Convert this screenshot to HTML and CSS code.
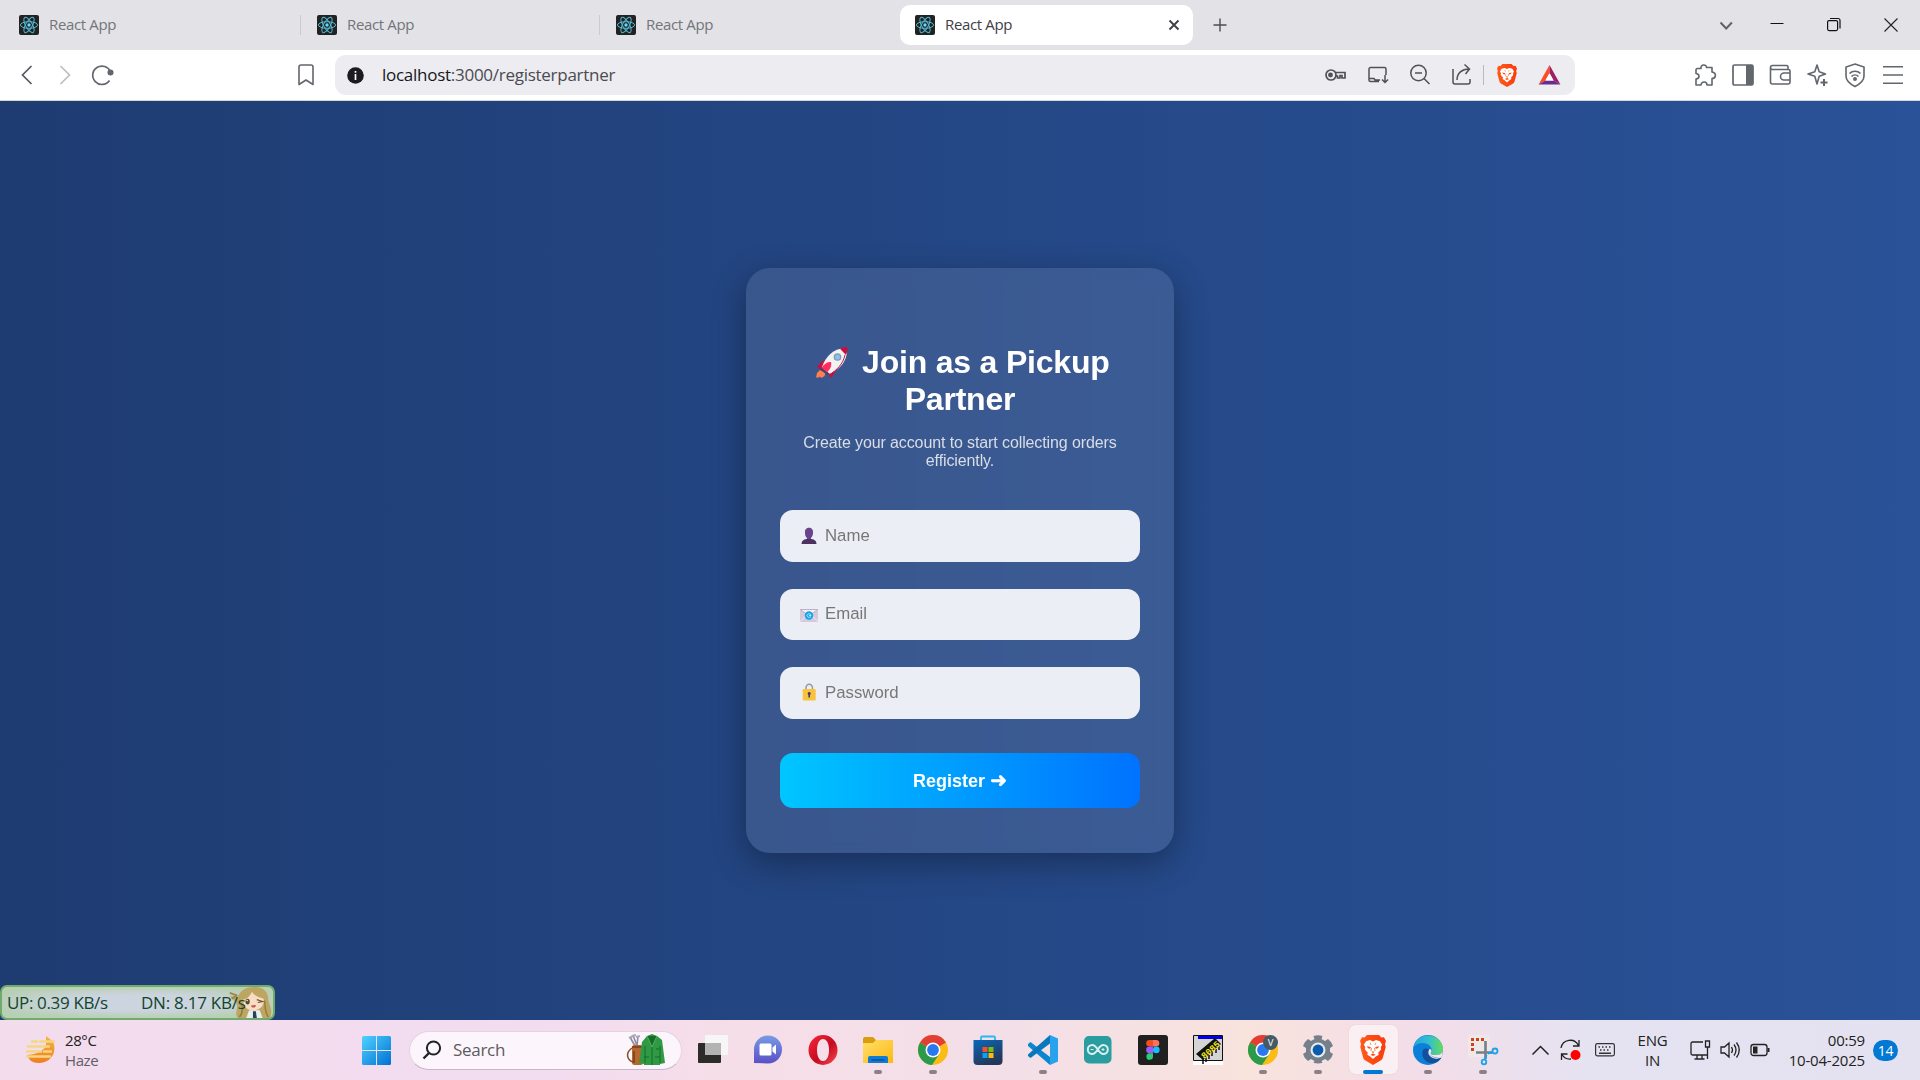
FILE: index.html
```html
<!DOCTYPE html>
<html lang="en">
<head>
<meta charset="utf-8">
<title>React App</title>
<link rel="stylesheet" href="styles.css">
</head>
<body>
<svg class="defs" aria-hidden="true">
  <defs>
    <symbol id="react" viewBox="0 0 20 20">
      <rect width="20" height="20" rx="2" fill="#222"/>
      <g fill="none" stroke="#53b9d4" stroke-width="1"><ellipse cx="10" cy="10" rx="8.6" ry="3.3"/><ellipse cx="10" cy="10" rx="8.6" ry="3.3" transform="rotate(60 10 10)"/><ellipse cx="10" cy="10" rx="8.6" ry="3.3" transform="rotate(120 10 10)"/></g>
      <circle cx="10" cy="10" r="1.7" fill="#61dafb"/>
    </symbol>
    <symbol id="lion" viewBox="0 0 26 30">
      <path d="M7 0h12l2.500 2.600 2.500-.4 2 3.800-1 3 .7 3-2.800 10.500c-.4 1.500-1.200 2.300-2.400 3.100L13 30l-7.500-4.400c-1.200-.8-2-1.600-2.400-3.100L.3 12 1 9 0 6l2-3.800 2.500.4z" fill="url(#braveg)"/>
      <g transform="translate(1.700 1.600) scale(.87)">
      <path d="M13 5.500l3.500-1.500 4.500 1.300 2.500 4-1.500 2.700.3 2.800-3.300 3.700.6 2.300-3.400 2.200L13 25.800l-3.200-2.800-3.400-2.200.6-2.300-3.300-3.700.3-2.800L2.500 9.300l2.500-4L9.500 4z" fill="#fff"/>
      <path d="M6 11l4.500 1-.8 1.900-2.500-.6zM20 11l-4.500 1 .8 1.900 2.500-.6zM11.300 17h3.400L13 19zM10 20.800l3-1.500 3 1.500-3 1.500z" fill="#fb4a12"/>
      <path d="M9.500 7l1.300 2.500M16.500 7l-1.300 2.500M11.300 13l-.7 3.500M14.700 13l.7 3.500" stroke="#fb4a12" stroke-width=".8"/>
      </g>
    </symbol>
    <symbol id="chrome" viewBox="0 0 30 30">
      <circle cx="15" cy="15" r="15" fill="#fbbc16"/>
      <path d="M15 15L2 7.500A15 15 0 0 0 14 30l7.500-11.300z" fill="#2c9a4b"/>
      <path d="M15 15L2 7.500A15 15 0 0 1 28 7.500z" fill="#e23e33"/>
      <circle cx="15" cy="15" r="7.500" fill="#fff"/><circle cx="15" cy="15" r="5.900" fill="#2a78ee"/>
    </symbol>
    <linearGradient id="braveg"><stop offset="0" stop-color="#ff5a1c"/><stop offset="1" stop-color="#f93c0c"/></linearGradient>
    <linearGradient id="win" x2="1" y2="1"><stop offset="0" stop-color="#4fd3ff"/><stop offset="1" stop-color="#0070d2"/></linearGradient>
    <linearGradient id="chatg" x2="0" y2="1"><stop offset="0" stop-color="#789be4"/><stop offset="1" stop-color="#5a4fc6"/></linearGradient>
    <linearGradient id="operag" x2="1" y2="1"><stop offset="0" stop-color="#ff2638"/><stop offset=".55" stop-color="#c30c22"/><stop offset="1" stop-color="#ff4a50"/></linearGradient>
    <linearGradient id="foldg" x2="1" y2="1"><stop offset="0" stop-color="#ffdf6c"/><stop offset="1" stop-color="#fdb910"/></linearGradient>
    <linearGradient id="storeg" x2=".5" y2="1"><stop offset="0" stop-color="#0969bb"/><stop offset="1" stop-color="#253658"/></linearGradient>
    <linearGradient id="edgeg"><stop offset="0" stop-color="#25a6df"/><stop offset=".5" stop-color="#31bdd2"/><stop offset="1" stop-color="#66dc59"/></linearGradient>
    <linearGradient id="sung" x2="0" y2="1"><stop offset="0" stop-color="#f4b640"/><stop offset="1" stop-color="#f17d22"/></linearGradient>
  </defs>
</svg>

<header class="tabs">
  <div class="tab"><svg class="i20"><use href="#react"/></svg><span>React App</span></div>
  <div class="tab"><svg class="i20"><use href="#react"/></svg><span>React App</span></div>
  <div class="tab plain"><svg class="i20"><use href="#react"/></svg><span>React App</span></div>
  <div class="tab active"><svg class="i20"><use href="#react"/></svg><span>React App</span>
    <svg class="close" viewBox="0 0 12 12"><path d="M1.500 1.500l9 9M10.500 1.500l-9 9" stroke="#3e4146" stroke-width="1.900"/></svg></div>
  <svg class="plus" viewBox="0 0 14 14"><path d="M7 .5v13M.5 7h13" stroke="#4b4d52" stroke-width="1.400"/></svg>
  <div class="controls">
    <svg class="i20" viewBox="0 0 20 20" fill="none" stroke="#5f6368" stroke-width="2"><path d="M4.500 7.500l5.700 6 5.700-6"/></svg>
    <svg class="i20" viewBox="0 0 20 20" fill="none" stroke="#111" stroke-width="1"><path d="M3.500 8.500h13"/></svg>
    <svg class="i20" viewBox="0 0 20 20" fill="none" stroke="#111" stroke-width="1.200"><rect x="3.600" y="5.600" width="10" height="10" rx="1.500"/><path d="M6 3.500h8a2 2 0 0 1 2 2v8"/></svg>
    <svg class="i20" viewBox="0 0 20 20" fill="none" stroke="#222" stroke-width="1.100"><path d="M3.500 3.500l13 13M16.500 3.500l-13 13"/></svg>
  </div>
</header>

<nav class="toolbar">
  <svg class="nav" viewBox="0 0 24 24" fill="none" stroke="#55595f" stroke-width="1.700"><path d="M16.500 3L7.500 12l9 9"/></svg>
  <svg class="nav" viewBox="0 0 24 24" fill="none" stroke="#bdbec1" stroke-width="1.700"><path d="M7.500 3l9 9-9 9"/></svg>
  <svg class="nav" viewBox="0 0 24 24" fill="none" stroke="#62666d" stroke-width="1.700"><path d="M19.500 9A9.200 9.200 0 1 0 18.500 17.500"/><circle cx="19.500" cy="9.500" r="2.200" fill="#62666d"/></svg>
  <svg class="bookmark" viewBox="0 0 16 22" fill="none" stroke="#62666d" stroke-width="1.600"><path d="M1 3a2 2 0 0 1 2-2h10a2 2 0 0 1 2 2v17.500L8 16l-7 4.500z" stroke-linejoin="round"/></svg>
  <div class="url">
    <svg class="info" viewBox="0 0 17 17"><circle cx="8.500" cy="8.500" r="8.300" fill="#1b1b20"/><path d="M8.500 4v1.700M8.500 7v6" stroke="#fff" stroke-width="1.700"/></svg>
    <span class="address"><b>localhost</b>:3000/registerpartner</span>
    <div class="urlicons">
      <svg class="i24" viewBox="0 0 24 24" fill="none" stroke="#4f5157" stroke-width="1.700"><circle cx="7" cy="12" r="5"/><circle cx="6.500" cy="12" r="1.600" fill="#4f5157"/><path d="M11.500 9.500h9.500v5.500h-3v-2.500h-2V15h-2.500v-2h-2"/></svg>
      <svg class="i24" viewBox="0 0 24 24" fill="none" stroke="#4f5157" stroke-width="1.500"><path d="M13 18.500H4.500a1.500 1.500 0 0 1-1.500-1.500V6a1.500 1.500 0 0 1 1.500-1.500h14A1.500 1.500 0 0 1 20 6v6M3 15.500h5l1 1.500h5M19 12v7M16 16.500l3 3 3-3"/></svg>
      <svg class="i24" viewBox="0 0 24 24" fill="none" stroke="#4f5157" stroke-width="1.500"><circle cx="10.500" cy="10" r="7.700"/><path d="M16 15.500l5.500 5.500M7 10h7"/></svg>
      <svg class="i24" viewBox="0 0 24 24" fill="none" stroke="#4f5157" stroke-width="1.500"><path d="M3 6v13a2 2 0 0 0 2 2h13a2 2 0 0 0 2-2v-3M7 17c0-7 5-11 12-11M14.500 1.500L19.500 6l-4 5"/></svg>
      <i></i>
      <svg class="brave"><use href="#lion"/></svg>
      <svg class="bat" viewBox="0 0 24 22"><path d="M12 0L0 21.500l7.500-4.500L12 9z" fill="#ff4b24"/><path d="M12 0l12 21.500L16.500 17 12 9z" fill="#9e1f63"/><path d="M0 21.500h24L16.500 17h-9z" fill="#662d91"/><path d="M12 9l4.500 8h-9z" fill="#fff"/></svg>
    </div>
  </div>
  <div class="right">
    <svg class="i24" viewBox="0 0 24 24" fill="none" stroke="#62666d" stroke-width="1.600" stroke-linejoin="round"><path d="M4 5.500h4C7 1 14 1 13.500 4.500h5.500V9c5 1 4 6.500 0 6.500V22h-5c0-4-5.500-4-6 0H3v-6c4-.5 4-5 0-5.500V6.500z"/></svg>
    <svg class="i24" viewBox="0 0 24 24"><rect x="2" y="2" width="20" height="20" rx="1.500" fill="none" stroke="#62666d" stroke-width="1.700"/><path d="M15 2h7v20h-7z" fill="#62666d"/></svg>
    <svg class="i24" viewBox="0 0 24 24" fill="none" stroke="#62666d" stroke-width="1.600"><path d="M20 6.500V4a1.500 1.500 0 0 0-1.500-1.500H4.500a2 2 0 0 0 0 4h16A1.500 1.500 0 0 1 22 8v11a2 2 0 0 1-2 2H4.500a2 2 0 0 1-2-2V4.500M22 10h-6a3.500 3.500 0 0 0 0 7h6"/></svg>
    <svg class="i24" viewBox="0 0 24 24" fill="none" stroke="#62666d" stroke-width="1.600" stroke-linejoin="round"><path d="M11 2l2.200 6.800L19.500 11l-6.300 2.200L11 21l-2.200-7.800L2 11l6.800-2.200z"/><path d="M18 16v7M14.500 19.500h7" stroke-width="2"/></svg>
    <svg class="i24" viewBox="0 0 24 24" fill="none" stroke="#62666d" stroke-width="1.600"><path d="M12 1l9 3v9c0 5-4 8-9 10.500C7 21 3 18 3 13V4z"/><path d="M6.500 10.500c3-3 8-3 11 0M8.500 13.500c2-2 5-2 7 0"/><circle cx="12" cy="16" r="1.200" fill="#62666d"/></svg>
    <svg class="i24" viewBox="0 0 24 24" fill="none" stroke="#62666d" stroke-width="1.600"><path d="M2 3.800h20M2 12h20M2 20.200h20"/></svg>
  </div>
</nav>

<main class="page">
  <form class="card">
    <h1><svg class="rocket" viewBox="0 0 32 31"><path d="M4 23l-3 3-1 4.500h3l1-1 1.500 1.500 3-2 1-3z" fill="#ff7f4e"/><path d="M1 19.500L8 13l6 1-8 10zM12 27l3 4 5-7-1-7z" fill="#c8103e"/><path d="M6 20C10 9 17 2 29 1c1.500 0 2 .5 2 2 0 11-6 18-17 24z" fill="#f2f2f4"/><path d="M24 1.700C27 .4 31-.5 31.400.6c.7 1.500-.4 5-1.400 7.400z" fill="#c8103e"/><path d="M29 8c-2 9-8 15-16 20" stroke="#c8103e" fill="none"/><path d="M6 20.500C8 16.500 12 14.500 15 15c1 4-1 8-4.500 10.500z" fill="#ff2e5f"/><path d="M4.500 21.500l7.500 6" stroke="#4b4468" stroke-width="2"/><circle cx="21.500" cy="10" r="3.200" fill="#7ec5f5" stroke="#8b98a5" stroke-width="1.300"/></svg> Join as a Pickup Partner</h1>
    <p>Create your account to start collecting orders efficiently.</p>
    <label class="field"><svg class="emoji" viewBox="0 0 18 18"><path d="M5 6c-1-7 9-7 8 0 0 3-1.500 4-2 5v2H7v-2C6 10 5 9 5 6z" fill="#6b438d"/><path d="M1.500 17c.3-3.500 2-4.500 5-5h5c3 .5 4.700 1.500 5 5z" fill="#4d315f"/></svg><input placeholder="Name"></label>
    <label class="field"><svg class="emoji" viewBox="0 0 18 18"><path d="M0 4h18v13H0z" fill="#d5c9dc"/><path d="M.5 4.500L9 11l8.500-6.500z" fill="#f5f1f7" stroke="#b4a6bd" stroke-width=".8"/><path d="M0 16.500L7 10M18 16.500L11 10" stroke="#eee7f1"/><circle cx="9" cy="10.500" r="4.200" fill="#12a5e8"/><path d="M11 11.500c-1 1.500-4 1-4-1s4-2.500 4 0h-2" stroke="#b9e7ff" fill="none"/></svg><input placeholder="Email"></label>
    <label class="field"><svg class="emoji" viewBox="0 0 18 18"><path d="M6 8V4.500a3.200 3.200 0 0 1 6.400 0V8" transform="translate(0 -1)" stroke="#9b9b9f" stroke-width="1.500" fill="none"/><rect x="2.700" y="5" width="13" height="11.500" rx="1.300" fill="#f9c23c"/><path d="M9.200 8.500v5" stroke="#433b6b" stroke-width="1.600"/><circle cx="9.200" cy="9.500" r="1.500" fill="#433b6b"/></svg><input placeholder="Password"></label>
    <button type="button">Register <span>➜</span></button>
  </form>
  <aside class="netmeter"><span>UP: 0.39 KB/s</span><span>DN: 8.17 KB/s</span>
    <svg class="girl" viewBox="0 0 44 32"><path d="M8 32C5 26 9 22 7 17L0 9l8 2c3-8 9-11 18-11 10 0 14 6 14 14 2 7 5 12 1 18z" fill="#bda562"/><path d="M0 6l8 3M2 12l5-3" stroke="#9d8846" stroke-width="2"/><path d="M14 13c5 0 8-6 9-8 3 5 9 6 12 7 1 8-4 12-11 12s-10-4-10-11z" fill="#f8dcc3"/><ellipse cx="18.500" cy="15" rx="2.200" ry="3" fill="#5d4a24"/><circle cx="18" cy="14" r=".8" fill="#fff"/><path d="M28 13l6 2-5 1" stroke="#70552f" fill="none" stroke-width="1.200"/><path d="M22 19l5-.5c0 3-4 4-5 .5z" fill="#c5514d"/><path d="M17 32l3-8h11l3 8z" fill="#e8eff0"/><path d="M24 25h3l1 7h-4z" fill="#2d4053"/><path d="M12 17c2 7 1 11-2 14M36 14c1 7 0 12 4 17" stroke="#927c3e" stroke-width="1.500" fill="none"/></svg>
  </aside>
</main>

<footer class="taskbar">
  <div class="weather">
    <svg class="sun" viewBox="0 0 31 30"><path d="M20 1c3 2 4 4 6 4 2 3 3 7 2 12-2 7-8 11-15 11S3 25 1 20c7 0 18-4 19-10z" fill="url(#sung)"/><path d="M6 6.500h5M14 6.500h14M2 11.500h21M1 16.500h14M18 16.500h7M1 21.500h23" stroke="#f6d681" stroke-width="2.400" stroke-linecap="round"/></svg>
    <div>28°C<small>Haze</small></div>
  </div>
  <svg class="start" viewBox="0 0 29 29"><path d="M0 1.500Q0 0 1.500 0H14v14H0zM15 0h12.500Q29 0 29 1.500V14H15zM0 15h14v14H1.500Q0 29 0 27.500zM15 15h14v12.500q0 1.500-1.500 1.500H15z" fill="url(#win)"/></svg>
  <div class="search">
    <svg class="i20" viewBox="0 0 20 20" fill="none" stroke="#222" stroke-width="2"><circle cx="11.500" cy="8" r="6.600"/><path d="M7 13l-5.500 5.500" stroke-width="2.400"/></svg>
    <span>Search</span>
    <svg class="golf" viewBox="0 0 38 32"><path d="M3 3l5 9M6 1l4 11M11 2l-1 10" stroke="#8b8ca0" stroke-width="1.600"/><path d="M2 4l4-2M5 2l4-1M9 3l4-1" stroke="#aaa9ba" stroke-width="2"/><rect x="5" y="11" width="11" height="20" rx="2.500" fill="#b7672e"/><path d="M5 14c-7 5-5 12 1 14" stroke="#8e4b22" fill="none" stroke-width="1.500"/><path d="M5 13h11M7 17v12" stroke="#71401f" stroke-width="1.500"/><path d="M20 2l5-2 5 2 5 4 3 23-5 1v1H17v-1l-5-1 3-21z" fill="#2f9a43"/><path d="M20 2l5 11 5-11" fill="#186b2b" stroke="#4eb45d"/><path d="M25 13v18M18 12v17M33 12v17M17 23h5M28 23h5M29 15h3" stroke="#176a29" stroke-width="1"/></svg>
  </div>
  <div class="apps">
    <div class="app"><svg viewBox="0 0 30 30"><rect y="8" width="23" height="20" rx="1" fill="#2c2c2b"/><rect x="7" y="0" width="23" height="20" rx="1" fill="#f6f6f6"/><path d="M7 8h16v12H7z" fill="#b3b3b3"/></svg></div>
    <div class="app"><svg viewBox="0 0 30 30"><path d="M1 28V14.500a14 14 0 1 1 14 14z" fill="url(#chatg)"/><rect x="6.500" y="8.500" width="12" height="12" rx="1.500" fill="#fff"/><path d="M19.500 12.500l3.500-3v10l-3.500-3z" fill="#fff"/></svg></div>
    <div class="app"><svg viewBox="0 0 30 30"><path fill-rule="evenodd" d="M15 0a14.500 15 0 1 1 0 30 14.500 15 0 1 1 0-30zM15 4c-4 0-6 5-6 11s2 11 6 11 6-5 6-11-2-11-6-11z" fill="url(#operag)"/></svg></div>
    <div class="app run"><svg viewBox="0 0 30 30"><path d="M0 4q0-2 2-2h8l3 3v7H0z" fill="#d99c0d"/><path d="M0 8h10l3-3h17v23H0z" fill="url(#foldg)"/><path d="M5 28v-5q0-2 2-2h16q2 0 2 2v5z" fill="#0f7bd3"/><path d="M8.500 25h13" stroke="#084c90" stroke-width="1.300"/></svg></div>
    <div class="app run"><svg><use href="#chrome"/></svg></div>
    <div class="app"><svg viewBox="0 0 30 30"><path d="M8 7V2.500Q8 1.500 9 1.500h12q1 0 1 1V7" stroke="#27b9f1" stroke-width="1.800" fill="none"/><path d="M.5 5h29v21q0 4-4 4h-21q-4 0-4-4z" fill="url(#storeg)"/><path d="M9.500 12h5v5h-5z" fill="#f35325"/><path d="M15.500 12h5v5h-5z" fill="#81bc06"/><path d="M9.500 18h5v5h-5z" fill="#05a6f0"/><path d="M15.500 18h5v5h-5z" fill="#ffba08"/></svg></div>
    <div class="app run"><svg viewBox="0 0 30 30"><path d="M0 9l2.500-2L22 22v8L0 11z" fill="#0b87d0"/><path d="M0 19.500L22 0v8.500L2.500 23 0 21z" fill="#0877bd"/><path d="M22 0l8 3.500v23L22 30z" fill="#29a2ee"/></svg></div>
    <div class="app"><svg viewBox="0 0 30 30"><rect x="1" y="1" width="27.500" height="27.500" rx="5" fill="#299da0"/><path d="M14.800 14.500c-2-3-3.500-4.500-5.500-4.500a4.500 4.500 0 0 0 0 9c2 0 3.500-1.500 5.500-4.500s3.500-4.500 5.500-4.500a4.500 4.500 0 0 1 0 9c-2 0-3.500-1.500-5.500-4.500z" fill="none" stroke="#dcefed" stroke-width="2"/><path d="M7.500 14.500h3M18.500 14.500h3M20 13v3" stroke="#dcefed"/></svg></div>
    <div class="app"><svg viewBox="0 0 30 30"><rect width="30" height="30" rx="3" fill="#202020"/><path d="M15 5h-3.500a3.300 3.300 0 0 0 0 6.600H15z" fill="#f24e1e"/><path d="M15 5h3a3.300 3.300 0 0 1 0 6.600h-3z" fill="#ff7262"/><path d="M15 11.600h-3.500a3.300 3.300 0 0 0 0 6.600H15z" fill="#a259ff"/><circle cx="18.300" cy="14.900" r="3.300" fill="#1abcfe"/><path d="M15 18.200h-3.500a3.300 3.300 0 1 0 3.500 3.300z" fill="#25cf73"/></svg></div>
    <div class="app"><svg viewBox="0 0 30 30"><path d="M0 0h30v30H0z" fill="#fff"/><path d="M.5.5h29v25H.5z" fill="#d5d5d5" stroke="#111"/><path d="M5 1h24v3H5z" fill="#0000e8"/><path d="M3 19L22 3l6 6L10 25z" fill="#111"/><path d="M10 24v5M13 22v5M16 20v4M19 17v4M23 14v4M26 11v4" stroke="#111" stroke-width="1.500"/><text x="-11" y="4" transform="translate(17 14) rotate(-41)" font-size="9" font-family="Liberation Mono" font-weight="700" fill="#f5eb17">8085</text></svg></div>
    <div class="app run"><svg viewBox="0 0 30 30"><use href="#chrome"/><circle cx="22.500" cy="7.500" r="7.500" fill="#465a66"/><text x="22.500" y="11" text-anchor="middle" font-family="Open Sans" font-size="9.500" fill="#fff">V</text></svg></div>
    <div class="app run"><svg viewBox="0 0 30 30"><path d="M11.500 4l-1-3q4.500-1.300 9 0l-1 3 3.500 2 3-2q4 3 5 7l-3 2v4l3 2q-1 4-5 7l-3-2-3.500 2 1 1.800q-4.500 1.300-9 0l1-1.800L8 24l-3 2q-4-3-5-7l3-2v-4l-3-2q1-4 5-7l3 2z" fill="#75808a"/><circle cx="15" cy="15" r="7.500" fill="#e6ebef"/><circle cx="15" cy="15" r="5.400" fill="#0c5cab"/></svg></div>
    <div class="app run current"><svg><use href="#lion"/></svg></div>
    <div class="app run"><svg viewBox="0 0 30 30"><circle cx="15" cy="15" r="15" fill="#0d7fd6"/><path d="M.5 12C3-3 27-4 30 13c.5 5-3 7-7.500 7-4 0-6-1-4-4 1-4-3-8-9-8-4 0-7 2-9 4z" fill="url(#edgeg)"/><path d="M10 15c-3 7 4 16 13 12.500 3-1.300 5-3.500 5.500-5-4 2-9 1.500-12-2-1.300-1.500-1.500-4-.3-6C13 13 11 13.500 10 15z" fill="#12509b"/><path d="M18.500 16c-2 3 0 4 4 4 3.500 0 6-1 7.300-4-.2 2.500-.8 4.500-1.300 6.500-4 2-9 1.500-12-2-1.300-1.500-1.500-4-.3-6 1-1 2 0 2.300 1.500z" fill="#f3e4ea"/><path d="M28.500 22c-6 2-11 0-12-4 2 5 8 5 12 4z" fill="#12509b"/></svg></div>
    <div class="app run"><svg viewBox="0 0 30 30"><rect width="22" height="22" rx="3" fill="#eee9e8"/><path d="M4.500 16V4.500H17" fill="none" stroke="#cd4218" stroke-width="3" stroke-dasharray="3 2"/><path d="M17.500 6v18M8 17.500h17" stroke="#777f89" stroke-width="2.600"/><circle cx="27" cy="16" r="2.500" fill="none" stroke="#20a0e6" stroke-width="1.800"/><circle cx="16" cy="27" r="2.300" fill="none" stroke="#20a0e6" stroke-width="1.800"/><path d="M17 24l1.500-4M20 18.500l4.500-1.500" stroke="#20a0e6" stroke-width="2"/></svg></div>
  </div>
  <div class="tray">
    <svg class="i20" viewBox="0 0 20 20" fill="none" stroke="#222" stroke-width="1.500"><path d="M2.500 14.500l8-8 8 8"/></svg>
    <svg class="i20 sync" viewBox="0 0 20 20" fill="none" stroke="#222" stroke-width="1.300"><path d="M1 8A9.300 9.300 0 0 1 18.500 5.500M19 0v6h-6M1.500 20v-6h6M2 14.500c2 3.500 5 5 9 4.500"/><circle cx="15.500" cy="15" r="5" fill="#f00" stroke="none"/></svg>
    <svg class="i20 keys" viewBox="0 0 20 20" fill="none" stroke="#333" stroke-width="1.200"><rect x=".6" y="3.600" width="18.800" height="12.300" rx="1.800"/><path d="M3.500 7h1.500m2 0h1.500m2 0h1.500m2 0h1.500M5 10h1.500m2 0h1.500m2 0h1.500M4 13.200h12" stroke-width="1.400"/></svg>
    <div class="lang">ENG<br>IN</div>
    <svg class="i20" viewBox="0 0 20 20" fill="none" stroke="#222" stroke-width="1.300"><path d="M13 2H2.500A1.500 1.500 0 0 0 1 3.500v10A1.500 1.500 0 0 0 2.500 15H17M7 15v4M12 15v4M4.500 19h10M15.500 1h4v6h-4zM17.500 7v12"/></svg>
    <svg class="i20" viewBox="0 0 20 20" fill="none" stroke="#222" stroke-width="1.300"><path d="M1 7h3.500L9 3v14l-4.500-4H1zM11.500 7q2 3 0 6M14 4.500q4 5.500 0 11M16.500 2.500q5.500 7.500 0 15"/></svg>
    <svg class="i20" viewBox="0 0 20 20" fill="none" stroke="#222" stroke-width="1.300"><rect x="1" y="4.500" width="16" height="11" rx="2.500"/><path d="M3 6.500h4.500v7H3z" fill="#222" stroke="none"/><path d="M18.500 8v4" stroke-width="2"/></svg>
    <div class="clock">00:59<br>10-04-2025</div>
    <div class="badge">14</div>
  </div>
</footer>
</body>
</html>
```
FILE: styles.css
```css
* { box-sizing: border-box; }
body {
  margin: 0;
  width: 1920px;
  height: 1080px;
  overflow: hidden;
  display: flex;
  flex-direction: column;
  font-family: "Open Sans", "Noto Sans", sans-serif;
}
svg { display: block; flex: none; overflow: visible; }
.defs { position: absolute; width: 0; height: 0; }
.i20 { width: 20px; height: 20px; }
.i24 { width: 24px; height: 24px; }

.tabs {
  height: 50px;
  flex: none;
  display: flex;
  align-items: center;
  background: #e3e2e7;
}
.tab {
  width: 299px;
  height: 20px;
  padding-left: 16px;
  display: flex;
  align-items: center;
  gap: 10px;
  border-right: 1px solid #cbcacf;
  color: #72757a;
  font-size: 15px;
  letter-spacing: -.35px;
}
.tab:first-child { width: 301px; padding-left: 19px; }
.tab.plain { border: 0; width: 300px; }
.tab.active {
  width: 293px;
  height: 40px;
  padding: 0 13px 0 15px;
  border: 0;
  border-radius: 10px;
  background: #fff;
  color: #3e4146;
}
.tab span { padding-bottom: 2px; }
.close { width: 12px; height: 12px; margin-left: auto; }
.plus { width: 14px; height: 14px; margin-left: 20px; }
.controls { display: flex; margin-left: auto; padding-right: 19px; gap: 37px; }
.controls svg:first-child { margin-right: -6px; }

.toolbar {
  height: 51px;
  flex: none;
  display: flex;
  align-items: center;
  padding: 0 15px;
  border-bottom: 1px solid #d7d7da;
  background: #fff;
}
.nav { width: 24px; height: 24px; margin-right: 14px; }
.nav:nth-child(3) { margin-right: 0; }
.bookmark { width: 16px; height: 22px; margin-left: 183px; }
.url {
  width: 1240px;
  height: 40px;
  margin-left: 21px;
  padding: 0 14px 0 12px;
  display: flex;
  align-items: center;
  border-radius: 11px;
  background: #edecf1;
}
.info { width: 17px; height: 17px; }
.address { margin-left: 18px; padding-bottom: 2px; font-size: 17px; letter-spacing: -.27px; color: #4a4b50; }
.address b { font-weight: 400; color: #17171b; }
.urlicons { margin-left: auto; display: flex; align-items: center; gap: 18px; }
.urlicons i { width: 1px; height: 20px; background: #b9b9be; margin: 0 -8px 0 -9px; }
.brave { width: 20px; height: 23px; margin-left: 3px; }
.bat { width: 23px; height: 20px; margin-left: 3px; }
.right { display: flex; gap: 13.600px; margin-left: auto; }

.page {
  position: relative;
  height: 919px;
  flex: none;
  display: flex;
  justify-content: center;
  align-items: center;
  background: linear-gradient(to right, #1e3c72, #2a5298);
  font-family: "Liberation Sans", Arial, sans-serif;
}
.card {
  width: 428px;
  height: 585px;
  padding: 76px 34px 0;
  border-radius: 24px;
  background: rgba(255, 255, 255, .1);
  box-shadow: 0 10px 34px rgba(0, 0, 0, .33);
  backdrop-filter: blur(10px);
  text-align: center;
}
h1 { margin: 0; font-size: 32px; line-height: 37px; letter-spacing: -.2px; color: #fff; }
.rocket { display: inline-block; width: 32px; height: 31px; margin: 0 5px 0 6px; vertical-align: -5px; }
.card p { margin: 16px 0 40px; font-size: 16px; line-height: 18px; letter-spacing: -.11px; color: #d9dde6; }
.field {
  height: 51.500px;
  margin-bottom: 27px;
  padding-left: 20px;
  display: flex;
  align-items: center;
  gap: 7px;
  border-radius: 13px;
  background: rgba(255, 255, 255, .9);
}
.emoji { width: 18px; height: 18px; }
.field input {
  flex: 1;
  min-width: 0;
  padding: 0;
  border: 0;
  outline: 0;
  background: none;
  font: 16.800px "Liberation Sans", Arial, sans-serif;
}
.field input::placeholder { color: #777; }
.card button {
  display: block;
  width: 360px;
  height: 55px;
  margin-top: 34px;
  padding: 2px 0 0;
  border: 0;
  border-radius: 13px;
  background: linear-gradient(to right, #00c6ff, #0072ff);
  color: #fff;
  font: bold 18px "Liberation Sans", Arial, sans-serif;
}
.card button span { font-family: "DejaVu Sans", sans-serif; font-size: 20.500px; line-height: 18px; -webkit-text-stroke: .5px #fff; }
.netmeter {
  position: absolute;
  left: 0;
  bottom: 0;
  width: 275px;
  height: 35px;
  padding-left: 5px;
  display: flex;
  align-items: center;
  border: 2px solid #70ab6d;
  border-radius: 7px;
  background: radial-gradient(ellipse at center, #ccd4df 35%, #b8cfb7 80%);
  box-shadow: inset 0 0 6px #b4d3a7;
  font: 17px "Open Sans", sans-serif;
  letter-spacing: -.35px;
  color: #11452c;
}
.netmeter span { position: relative; z-index: 1; width: 136px; white-space: nowrap; }
.netmeter span + span { width: 92px; letter-spacing: -.25px; }
.girl { width: 44px; height: 31px; margin-left: -4px; }

.taskbar {
  height: 60px;
  flex: none;
  display: flex;
  align-items: center;
  background: linear-gradient(90deg, #f3dcec 0, #f2dcf0 28%, #f6dee8 38%, #f3dfe7 53%, #f8e3dd 65%, #f3dde8 74%, #e5e3f2 83%, #e4e2f0 100%);
  color: #222;
  font-size: 15px;
  line-height: 20px;
}
.weather { width: 336px; padding-left: 26px; display: flex; align-items: center; gap: 8px; letter-spacing: -.4px; }
.weather small { display: block; font-size: 15px; color: #606066; }
.sun { width: 31px; height: 30px; }
.start { width: 29px; height: 29px; margin: 0 18px 0 26px; }
.search {
  width: 273px;
  height: 39px;
  padding: 0 16px 0 12px;
  display: flex;
  align-items: center;
  border: 1px solid #e5d2e2;
  border-bottom-color: #cbb6c9;
  border-radius: 20px;
  background: #fcf6fc;
  font-size: 17px;
  color: #5e5b60;
}
.search span { margin-left: 11px; letter-spacing: -.3px; }
.golf { width: 38px; height: 32px; margin-left: auto; }
.apps { display: flex; height: 60px; margin-left: 3.500px; }
.app { width: 55px; height: 60px; padding-top: 15px; display: flex; flex-direction: column; align-items: center; }
.app svg { width: 30px; height: 30px; }
.run::after { content: ""; width: 8px; height: 4px; margin-top: 5px; border-radius: 2px; background: #8b8085; }
.current {
  width: 49px;
  height: 49px;
  margin: 5px 3px 0;
  padding-top: 10px;
  border-radius: 6px;
  background: #faf0f4;
  box-shadow: 0 0 1px #c9b5bd;
}
.current::after { width: 20px; background: #0078d4; }
.tray { margin-left: auto; padding-right: 22px; display: flex; align-items: center; letter-spacing: -.2px; }
.sync { margin-left: 10px; }
.keys { margin-left: 15px; }
.lang { width: 75px; text-align: center; }
.lang ~ svg { margin-right: 10px; }
.clock { width: 85px; text-align: right; white-space: nowrap; }
.weather div, .lang, .clock { padding-bottom: 1px; }
.badge {
  width: 25px;
  height: 21px;
  margin-left: 8px;
  border-radius: 11px;
  background: #0078d4;
  color: #fff;
  font-size: 14px;
  line-height: 21px;
  text-align: center;
}
```
